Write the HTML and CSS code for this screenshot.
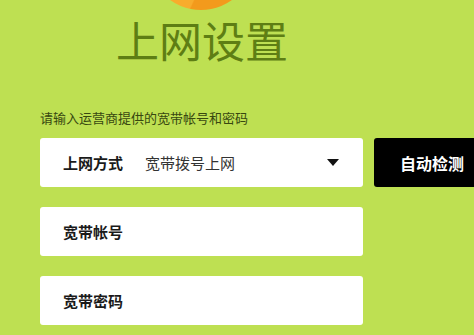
FILE: index.html
```html
<!DOCTYPE html>
<html lang="zh-CN">
<head>
    <meta charset="UTF-8">
    <meta name="viewport" content="width=device-width, initial-scale=1.0">
    <title>上网设置</title>
    <link rel="stylesheet" href="styles.css">
</head>
<body>
    <div class="page">
        <div class="logo"></div>
        <h1 class="title">上网设置</h1>
        <p class="hint">请输入运营商提供的宽带帐号和密码</p>
        <div class="row">
            <div class="field select">
                <span class="label">上网方式</span>
                <span class="value">宽带拨号上网</span>
                <span class="arrow"></span>
            </div>
            <button type="button" class="btn">自动检测</button>
        </div>
        <div class="row">
            <div class="field"><span class="label">宽带帐号</span></div>
        </div>
        <div class="row">
            <div class="field"><span class="label">宽带密码</span></div>
        </div>
    </div>
</body>
</html>
```

FILE: styles.css
```css
body, html {
    margin: 0;
    height: 100%;
    background: #bee052;
    font-family: "Noto Sans CJK SC", "Noto Sans", sans-serif;
    overflow: hidden;
}

.page {
    padding-left: 40px;
}

.logo {
    width: 106px;
    height: 106px;
    margin: -96px 0 0 108px;
    border-radius: 50%;
    background: linear-gradient(115deg, #f8ac2c 58%, #f39a1c 59%);
}

.title {
    margin: 7px 0 0 76px;
    font-size: 43px;
    line-height: 44px;
    font-weight: normal;
    color: #5e7e14;
}

.hint {
    margin: 50px 0 0 0;
    font-size: 13px;
    line-height: 13px;
    color: #384810;
}

.row {
    display: flex;
    gap: 11px;
    margin-top: 20px;
}

.hint + .row {
    margin-top: 14px;
}

.field {
    width: 323px;
    height: 49px;
    flex-shrink: 0;
    background: #fff;
    border-radius: 3px;
    display: flex;
    align-items: center;
    padding-left: 23px;
    box-sizing: border-box;
}

.label {
    font-size: 15px;
    font-weight: bold;
    color: #1a1a1a;
}

.value {
    margin-left: 22px;
    font-size: 15px;
    color: #333;
    flex: 1;
}

.arrow {
    width: 0;
    height: 0;
    border-left: 6px solid transparent;
    border-right: 6px solid transparent;
    border-top: 7px solid #111;
    margin-right: 24px;
}

.btn {
    width: 120px;
    height: 49px;
    flex-shrink: 0;
    background: #000;
    color: #fff;
    border: none;
    border-radius: 3px;
    font-family: inherit;
    font-size: 16px;
    font-weight: bold;
    text-align: left;
    padding-left: 26px;
}
```
